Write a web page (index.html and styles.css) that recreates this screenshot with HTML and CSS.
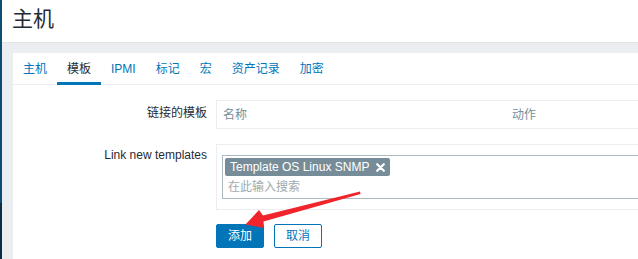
FILE: index.html
```html
<!DOCTYPE html>
<html lang="zh">
<head>
<meta charset="utf-8">
<title>主机</title>
<link rel="stylesheet" href="styles.css">
</head>
<body>
<div class="layout">
  <div class="sidebar"></div>
  <div class="main">
    <header class="header"><h1 class="title">主机</h1></header>
    <div class="content">
      <div class="panel">
        <ul class="tabs">
          <li class="tab">主机</li>
          <li class="tab active">模板</li>
          <li class="tab">IPMI</li>
          <li class="tab">标记</li>
          <li class="tab">宏</li>
          <li class="tab">资产记录</li>
          <li class="tab">加密</li>
        </ul>
        <div class="form">
          <div class="label label-1">链接的模板</div>
          <div class="field table-box">
            <div class="th th-name">名称</div>
            <div class="th">动作</div>
          </div>
          <div class="label label-2">Link new templates</div>
          <div class="field wrap-box">
            <div class="multiselect">
              <div class="tags">
                <span class="tag">Template OS Linux SNMP<svg class="tag-x" width="9" height="9" viewBox="0 0 9 9"><path d="M1.2 1.2 L7.8 7.8 M7.8 1.2 L1.2 7.8" stroke="#fff" stroke-width="2.2" stroke-linecap="round"/></svg></span>
              </div>
              <div class="placeholder">在此输入搜索</div>
            </div>
          </div>
          <div class="buttons">
            <button class="btn btn-primary">添加</button>
            <button class="btn btn-alt">取消</button>
          </div>
        </div>
      </div>
    </div>
  </div>
</div>
<svg class="arrow" width="638" height="259" viewBox="0 0 638 259">
  <polygon points="360,191.5 263,215.5 259,210 245.5,224.5 264,228 263.5,221.5 360.5,194" fill="#f0242a"/>
</svg>
</body>
</html>
```

FILE: styles.css
```css
html, body {
  margin: 0;
  padding: 0;
  overflow: hidden;
  width: 638px;
  height: 259px;
  background: #ebeef0;
  font-family: "Liberation Sans", Arial, "Noto Sans CJK SC", sans-serif;
  font-size: 12px;
  color: #1f2c33;
}

.layout {
  display: flex;
  width: 638px;
  height: 259px;
}

.sidebar {
  width: 2px;
  flex: 0 0 2px;
  background: linear-gradient(to bottom, #0f4c74 0, #0f4c74 203px, #0a2d45 203px);
}

.main {
  flex: 1;
  min-width: 0;
  display: flex;
  flex-direction: column;
}

.header {
  height: 42px;
  background: #fff;
  border-bottom: 1px solid #dfe4e7;
  padding-left: 10px;
}

.title {
  margin: 0;
  font-size: 21px;
  font-weight: normal;
  line-height: 38px;
  color: #1f2c33;
}

.content {
  padding: 10px 0 0 11px;
  flex: 1;
}

.panel {
  background: #fff;
  height: 100%;
}

.tabs {
  list-style: none;
  margin: 0;
  padding: 0;
  display: flex;
  border-bottom: 1px solid #ebeef0;
}

.tab {
  padding: 9px 10px 6px;
  line-height: 14px;
  color: #0275b8;
  border-bottom: 3px solid transparent;
  margin-bottom: -1px;
}

.tab.active {
  color: #1f2c33;
  border-bottom-color: #0275b8;
}

.form {
  display: grid;
  grid-template-columns: 194px 1fr;
  column-gap: 9px;
  row-gap: 15px;
  padding-top: 15px;
  align-items: start;
}

.label {
  text-align: right;
  line-height: 14px;
}

.label-1 {
  padding-top: 6px;
}

.label-2 {
  padding-top: 4px;
}

.field {
  border: 1px solid #ebeef0;
  border-right: none;
}

.table-box {
  display: flex;
  height: 27px;
  align-items: center;
}

.th {
  color: #768d99;
  padding-left: 6px;
  line-height: 14px;
}

.th-name {
  width: 283px;
}

.wrap-box {
  padding: 10px 0 10px 5px;
}

.multiselect {
  border: 1px solid #acbbc2;
  border-right: none;
  padding: 2px;
  box-sizing: border-box;
  height: 44px;
}

.tags {
  display: flex;
}

.tag {
  display: inline-flex;
  align-items: center;
  background: #768d99;
  color: #fff;
  height: 18px;
  padding: 0 5px;
  border-radius: 2px;
  line-height: 18px;
}

.tag-x {
  margin-left: 7px;
  margin-top: 1px;
}

.placeholder {
  color: #9ea9ae;
  padding-left: 3px;
  line-height: 20px;
  margin-top: 1px;
}

.buttons {
  grid-column: 2;
  display: flex;
  gap: 10px;
  margin-top: -1px;
}

.btn {
  font-family: "Liberation Sans", Arial, "Noto Sans CJK SC", sans-serif;
  font-size: 12px;
  height: 24px;
  padding: 0 11px;
  border-radius: 2px;
  border: 1px solid #0275b8;
  line-height: 22px;
  margin: 0;
}

.btn-primary {
  background: #0275b8;
  color: #fff;
}

.btn-alt {
  background: #fff;
  color: #0275b8;
}

.arrow {
  position: absolute;
  left: 0;
  top: 0;
  pointer-events: none;
}
```
